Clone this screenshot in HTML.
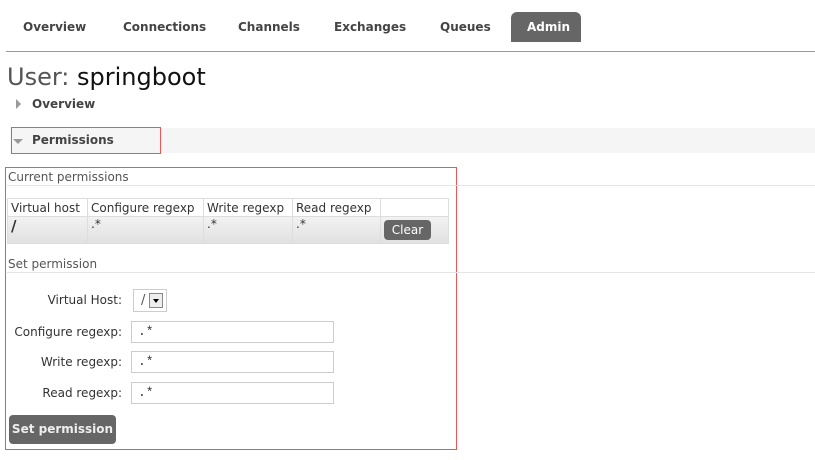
<!DOCTYPE html>
<html><head><meta charset="utf-8"><style>
body{margin:0;width:815px;height:460px;background:#fff;font-family:"DejaVu Sans","Liberation Sans",sans-serif;color:#333;position:relative;overflow:hidden}
.a{position:absolute;white-space:nowrap}
.nav{font-size:12px;font-weight:bold;color:#444;top:20px}
.lbl{font-size:12px;color:#333;text-align:right;width:118px;left:4px}
.inp{position:absolute;left:131px;border:1px solid #ccc;background:#fff;font-family:"Liberation Mono",monospace;font-size:13px;line-height:20px;padding-left:6px;box-sizing:border-box;width:203px;height:22px}
td{border:1px solid #ddd;padding:0 3px;font-size:12px;overflow:hidden;white-space:nowrap}
</style></head><body>
<div class="a nav" style="left:23px">Overview</div>
<div class="a nav" style="left:123px">Connections</div>
<div class="a nav" style="left:238px">Channels</div>
<div class="a nav" style="left:334px">Exchanges</div>
<div class="a nav" style="left:440px">Queues</div>
<div class="a" style="left:511px;top:12px;width:70px;height:30px;background:#666;border-radius:6px 6px 0 0"></div>
<div class="a nav" style="left:527px;color:#fff">Admin</div>
<div class="a" style="left:6px;top:51px;width:809px;height:1px;background:#999"></div>
<div class="a" style="left:7px;top:63px;font-size:24px;color:#555">User: <span style="color:#111">springboot</span></div>
<div class="a" style="left:16px;top:99px;width:0;height:0;border-left:5px solid #999;border-top:5px solid transparent;border-bottom:5px solid transparent"></div>
<div class="a" style="left:32px;top:97px;font-size:12px;font-weight:bold;color:#444">Overview</div>
<div class="a" style="left:10px;top:128px;width:805px;height:25px;background:#f5f5f5"></div>
<div class="a" style="left:11px;top:127px;width:148px;height:25px;border:1px solid #e55"></div>
<div class="a" style="left:13px;top:139px;width:0;height:0;border-top:5px solid #999;border-left:5px solid transparent;border-right:5px solid transparent"></div>
<div class="a" style="left:32px;top:133px;font-size:12px;font-weight:bold;color:#444">Permissions</div>
<div class="a" style="left:5px;top:167px;width:450px;height:281px;border:1px solid #e55"></div>
<div class="a" style="left:8px;top:170px;font-size:12px;color:#555">Current permissions</div>
<div class="a" style="left:7px;top:185px;width:808px;height:1px;background:#e5e5e5"></div>
<table class="a" style="left:7px;top:198px;border-collapse:collapse;width:441px;table-layout:fixed;background:#fff">
<colgroup><col style="width:80px"><col style="width:116px"><col style="width:89px"><col style="width:88px"><col style="width:68px"></colgroup>
<tr style="height:18px"><td>Virtual host</td><td>Configure regexp</td><td>Write regexp</td><td>Read regexp</td><td></td></tr>
<tr style="height:27px;background:linear-gradient(#f2f2f2,#e0e0e0);vertical-align:top"><td style="font-weight:bold;font-size:15px">/</td><td>.*</td><td>.*</td><td>.*</td><td style="vertical-align:middle"><div style="background:#666;color:#fff;border-radius:4px;width:47px;height:20px;line-height:20px;text-align:center;font-size:12px">Clear</div></td></tr>
</table>
<div class="a" style="left:8px;top:257px;font-size:12px;color:#555">Set permission</div>
<div class="a" style="left:7px;top:272px;width:808px;height:1px;background:#e5e5e5"></div>
<div class="a lbl" style="top:293px">Virtual Host:</div>
<div class="a" style="left:133px;top:289px;width:34px;height:23px;border:1px solid #ccc;box-sizing:border-box;font-size:13px;line-height:21px;padding-left:7px;color:#555">/</div>
<div class="a" style="left:149px;top:293px;width:14px;height:15px;border:1px solid #888;background:#eee;box-sizing:border-box"></div>
<div class="a" style="left:153px;top:299px;border-top:4px solid #000;border-left:3px solid transparent;border-right:3px solid transparent"></div>
<div class="a lbl" style="top:325px">Configure regexp:</div>
<div class="inp" style="top:321px">.*</div>
<div class="a lbl" style="top:355px">Write regexp:</div>
<div class="inp" style="top:351px">.*</div>
<div class="a lbl" style="top:386px">Read regexp:</div>
<div class="inp" style="top:382px">.*</div>
<div class="a" style="left:9px;top:415px;width:107px;height:29px;background:#666;border-radius:4px;color:#eee;font-size:12px;font-weight:bold;line-height:29px;text-align:center">Set permission</div>
</body></html>
